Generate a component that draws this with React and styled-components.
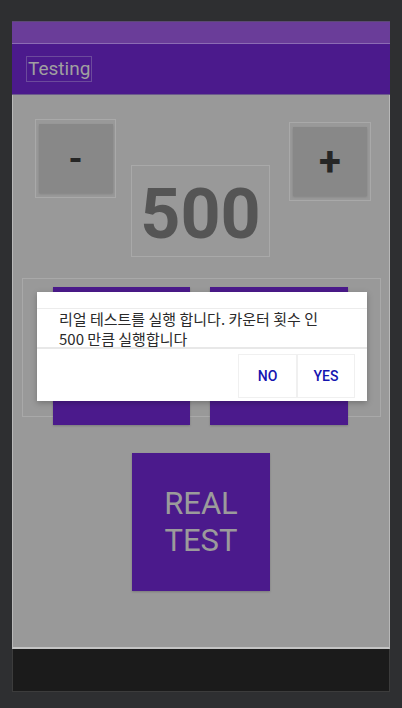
import React from 'react';
import styled, { createGlobalStyle } from 'styled-components';

const Global = createGlobalStyle`
  html, body { margin: 0; padding: 0; background: #2e2f31; }
  body { font-family: Roboto, "Noto Sans", sans-serif; }
`;

const Screen = styled.div`
  width: 402px;
  height: 708px;
  background: #2e2f31;
  padding: 21px 0 0 12px;
  box-sizing: border-box;
`;

const Phone = styled.div`
  width: 378px;
  display: flex;
  flex-direction: column;
`;

const StatusBar = styled.div`
  height: 21px;
  background: #6a3d99;
  border-bottom: 1px solid #8c6cb4;
  border-top: 1px solid #5c4a74;
`;

const AppBar = styled.div`
  height: 50px;
  background: #4b1a8c;
  display: flex;
  align-items: center;
  padding-left: 14px;
  border-bottom: 1px solid #6c5a8c;
`;

const Title = styled.div`
  height: 24px;
  padding: 0 1px;
  border: 1px solid #6c4a9c;
  font-size: 19px;
  line-height: 24px;
  color: #a0a0a0;
  margin-top: -1px;
`;

const Content = styled.div`
  position: relative;
  height: 554px;
  background: #999999;
  border-left: 1px solid #b8b8b8;
  border-right: 1px solid #b8b8b8;
  border-bottom: 2px solid #c4c4c4;
  box-sizing: border-box;
  display: flex;
  flex-direction: column;
  align-items: center;
`;

const TopRow = styled.div`
  align-self: stretch;
  display: flex;
  align-items: flex-start;
  padding-left: 22px;
`;

const StepBox = styled.div`
  width: ${(p) => p.w}px;
  height: ${(p) => p.h}px;
  margin-top: ${(p) => p.top}px;
  margin-left: ${(p) => p.left || 0}px;
  border: 1px solid #a9a9a9;
  box-sizing: border-box;
  display: flex;
  align-items: center;
  justify-content: center;
`;

const StepButton = styled.div`
  width: 74px;
  height: 69px;
  background: #888888;
  box-shadow: 0 1px 2px rgba(0, 0, 0, 0.15);
  display: flex;
  align-items: center;
  justify-content: center;
  font-size: ${(p) => p.fs || 36}px;
  font-weight: 700;
  color: #262626;
  line-height: 1;
`;

const Count = styled.div`
  width: 139px;
  height: 92px;
  margin-top: 70px;
  margin-left: 15px;
  border: 1px solid #a9a9a9;
  box-sizing: border-box;
  padding-top: 5px;
  text-align: center;
  font-size: 70px;
  font-weight: 700;
  line-height: 86px;
  color: #555555;
`;

const ActionRow = styled.div`
  align-self: stretch;
  margin: 21px 8px 0 9px;
  height: 139px;
  border: 1px solid #a9a9a9;
  box-sizing: border-box;
  display: flex;
  padding-left: 30px;
  gap: 20px;
`;

const PurpleButton = styled.div`
  width: ${(p) => p.size}px;
  height: ${(p) => p.h || p.size}px;
  margin-top: ${(p) => p.top || 0}px;
  background: #4b1a8c;
  box-shadow: 0 1px 2px rgba(0, 0, 0, 0.2);
  flex-shrink: 0;
  display: flex;
  align-items: center;
  justify-content: center;
  text-align: center;
  color: #9b9b9b;
  font-size: 31px;
  line-height: 37px;
`;

const Dialog = styled.div`
  position: absolute;
  left: 24px;
  top: 197px;
  width: 330px;
  height: 109px;
  background: #ffffff;
  box-shadow: 0 2px 6px rgba(0, 0, 0, 0.25);
  display: flex;
  flex-direction: column;
`;

const Message = styled.div`
  margin-top: 16px;
  padding: 0 0 0 22px;
  height: 41px;
  box-sizing: border-box;
  border-top: 1px solid #ececec;
  border-bottom: 2px solid #e8e8e8;
  font-family: "Noto Sans CJK KR", Roboto, sans-serif;
  font-size: 15px;
  line-height: 20px;
  color: #2a2a2a;
`;

const Actions = styled.div`
  display: flex;
  justify-content: flex-end;
  padding: 5px 12px 0 0;
`;

const DialogButton = styled.div`
  width: ${(p) => p.w}px;
  height: 44px;
  border: 1px solid #f0f0f0;
  box-sizing: border-box;
  display: flex;
  align-items: center;
  justify-content: center;
  font-size: 14px;
  font-weight: 500;
  color: #1414b0;
`;

const NavBar = styled.div`
  height: 43px;
  background: #1b1b1b;
  border: 1px solid #3c3c3c;
  border-top: none;
  box-sizing: border-box;
`;

export default function App() {
  return (
    <Screen>
      <Global />
      <Phone>
        <StatusBar />
        <AppBar>
          <Title>Testing</Title>
        </AppBar>
        <Content>
          <TopRow>
            <StepBox w={81} h={79} top={24}>
              <StepButton>-</StepButton>
            </StepBox>
            <Count>500</Count>
            <StepBox w={82} h={79} top={27} left={19}>
              <StepButton fs={40}>+</StepButton>
            </StepBox>
          </TopRow>
          <ActionRow>
            <PurpleButton size={137} h={138} top={8} />
            <PurpleButton size={138} h={138} top={8} />
          </ActionRow>
          <PurpleButton size={138} top={36}>
            REAL
            <br />
            TEST
          </PurpleButton>
          <Dialog>
            <Message>
              리얼 테스트를 실행 합니다. 카운터 횟수 인
              <br />
              500 만큼 실행합니다
            </Message>
            <Actions>
              <DialogButton w={59}>NO</DialogButton>
              <DialogButton w={58}>YES</DialogButton>
            </Actions>
          </Dialog>
        </Content>
        <NavBar />
      </Phone>
    </Screen>
  );
}
